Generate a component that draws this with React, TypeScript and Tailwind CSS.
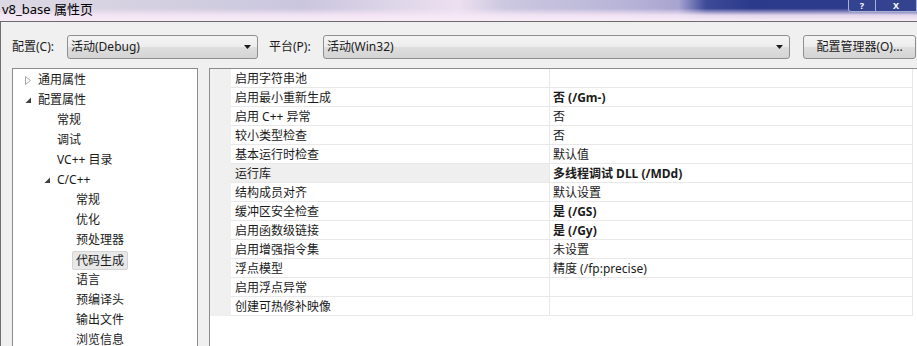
import React from "react";

type TreeItem = { t: string; l: 0 | 1 | 2; exp?: "c" | "e"; sel?: boolean };

const tree: TreeItem[] = [
  { t: "通用属性", l: 0, exp: "c" },
  { t: "配置属性", l: 0, exp: "e" },
  { t: "常规", l: 1 },
  { t: "调试", l: 1 },
  { t: "VC++ 目录", l: 1 },
  { t: "C/C++", l: 1, exp: "e" },
  { t: "常规", l: 2 },
  { t: "优化", l: 2 },
  { t: "预处理器", l: 2 },
  { t: "代码生成", l: 2, sel: true },
  { t: "语言", l: 2 },
  { t: "预编译头", l: 2 },
  { t: "输出文件", l: 2 },
  { t: "浏览信息", l: 2 },
];

const levelPad: Record<number, string> = {
  0: "pl-[12px]",
  1: "pl-[31px]",
  2: "pl-[50px]",
};

type Row = { n: string; v: string; b?: boolean; sel?: boolean };
const rows: Row[] = [
  { n: "启用字符串池", v: "" },
  { n: "启用最小重新生成", v: "否 (/Gm-)", b: true },
  { n: "启用 C++ 异常", v: "否" },
  { n: "较小类型检查", v: "否" },
  { n: "基本运行时检查", v: "默认值" },
  { n: "运行库", v: "多线程调试 DLL (/MDd)", b: true, sel: true },
  { n: "结构成员对齐", v: "默认设置" },
  { n: "缓冲区安全检查", v: "是 (/GS)", b: true },
  { n: "启用函数级链接", v: "是 (/Gy)", b: true },
  { n: "启用增强指令集", v: "未设置" },
  { n: "浮点模型", v: "精度 (/fp:precise)" },
  { n: "启用浮点异常", v: "" },
  { n: "创建可热修补映像", v: "" },
];

function Arrow() {
  return (
    <svg width="8" height="5" viewBox="0 0 8 5" className="shrink-0">
      <path d="M0 0 H7 L3.5 4 Z" fill="#1a1a1a" />
    </svg>
  );
}

function Expander({ kind }: { kind?: "c" | "e" }) {
  if (kind === "c")
    return (
      <svg width="7" height="9" viewBox="0 0 7 9">
        <path d="M0.5 0.5 L5.5 4.5 L0.5 8.5 Z" fill="none" stroke="#a6a6a6" strokeWidth="1" />
      </svg>
    );
  if (kind === "e")
    return (
      <svg width="7" height="7" viewBox="0 0 7 7">
        <path d="M6 0.5 L6 6 L0.5 6 Z" fill="#404040" />
      </svg>
    );
  return null;
}

const btnBg =
  "rounded-[3px] border border-[#8e8f8f] bg-[linear-gradient(#f4f4f4_0%,#ececec_50%,#dedede_50%,#d4d4d4_100%)]";

export default function App() {
  return (
    <div className="w-[917px] h-[346px] overflow-hidden flex flex-col text-[12px] text-[#1a1a1a] font-['Noto_Sans','Noto_Sans_CJK_SC',sans-serif] bg-[#f0f0f0]">
      {/* Title bar */}
      <div className="relative h-[22px] shrink-0 border-b border-[#6a6a6a] bg-[linear-gradient(to_right,#dcd8e4_0%,#d2cee0_20%,#cac6de_33%,#ece0f0_50%,#ccc8e0_55%,#b8b4d8_68%,#a8a4d0_74%,#3c4a98_77%,#2c3a8c_82%,#2e3c8e_100%)]">
        <div className="absolute inset-0 bg-[linear-gradient(to_bottom,rgba(248,236,248,0)_0%,rgba(248,236,248,0)_40%,rgba(246,230,246,0.9)_72%,#f8ecf8_100%)]" />
        <div className="relative pl-[2px] leading-[18px] text-[13px] text-black">v8_base 属性页</div>
        <div className="absolute top-0 right-0 flex">
          <div className="w-[28px] h-[12px] border border-t-0 border-[#aab2d4] rounded-bl-[3px] bg-[#34438f] flex items-center justify-center text-white text-[9px] leading-[10px] font-bold">
            ?
          </div>
          <div className="w-[41px] h-[12px] border border-t-0 border-l-0 border-[#aab2d4] bg-[#34438f] flex items-center justify-center text-white text-[9px] leading-[10px] font-bold">
            X
          </div>
        </div>
      </div>

      {/* Body */}
      <div className="flex-1 flex flex-col border-l border-[#6e6e6e] min-h-0">
        {/* Config row */}
        <div className="flex items-center mt-[13px] h-[24px] pl-[11px]">
          <div className="w-[55px] leading-[26px]">配置(C):</div>
          <div className={`w-[191px] h-[24px] ${btnBg} flex items-center pl-[3px] pr-[5px]`}>
            <span className="flex-1 leading-[24px]">活动(Debug)</span>
            <Arrow />
          </div>
          <div className="w-[54px] ml-[11px] leading-[26px]">平台(P):</div>
          <div className={`w-[467px] h-[24px] ${btnBg} flex items-center pl-[3px] pr-[5px]`}>
            <span className="flex-1 leading-[24px]">活动(Win32)</span>
            <Arrow />
          </div>
          <div className={`w-[113px] ml-[13px] h-[24px] ${btnBg} flex items-center justify-center leading-[24px]`}>
            配置管理器(O)...
          </div>
        </div>

        {/* Panels */}
        <div className="flex mt-[9px] pl-[11px] flex-1 min-h-0">
          {/* Tree */}
          <div className="w-[186px] h-[300px] shrink-0 border border-[#8c8c8c] bg-white pt-[1px]">
            {tree.map((it, i) => (
              <div key={i} className={`h-[20px] flex items-center ${levelPad[it.l]}`}>
                <div className="w-[13px] flex items-center">
                  <Expander kind={it.exp} />
                </div>
                {it.sel ? (
                  <div className="-ml-[4px] h-[19px] px-[3px] rounded-[2px] border border-[#d4d4d4] bg-[#e8e8e8] leading-[17px]">
                    {it.t}
                  </div>
                ) : (
                  <div className="leading-[20px]">{it.t}</div>
                )}
              </div>
            ))}
          </div>

          {/* Property grid */}
          <div className="ml-[11px] flex-1 h-[300px] border-l border-t border-[#8c8c8c] bg-white">
            {rows.map((r, i) => (
              <div key={i} className="flex h-[19px]">
                <div className="w-[21px] shrink-0 bg-[#f0f0f0]" />
                <div
                  className={`w-[319px] shrink-0 border-r border-b border-[#e8e8e8] pl-[4px] leading-[20px] ${
                    r.sel ? "bg-[#efefef]" : ""
                  }`}
                >
                  {r.n}
                </div>
                <div
                  className={`w-[363px] shrink-0 border-r border-b border-[#e8e8e8] pl-[3px] leading-[20px] ${
                    r.b ? "font-bold" : ""
                  }`}
                >
                  {r.v}
                </div>
              </div>
            ))}
          </div>
        </div>
      </div>
    </div>
  );
}
